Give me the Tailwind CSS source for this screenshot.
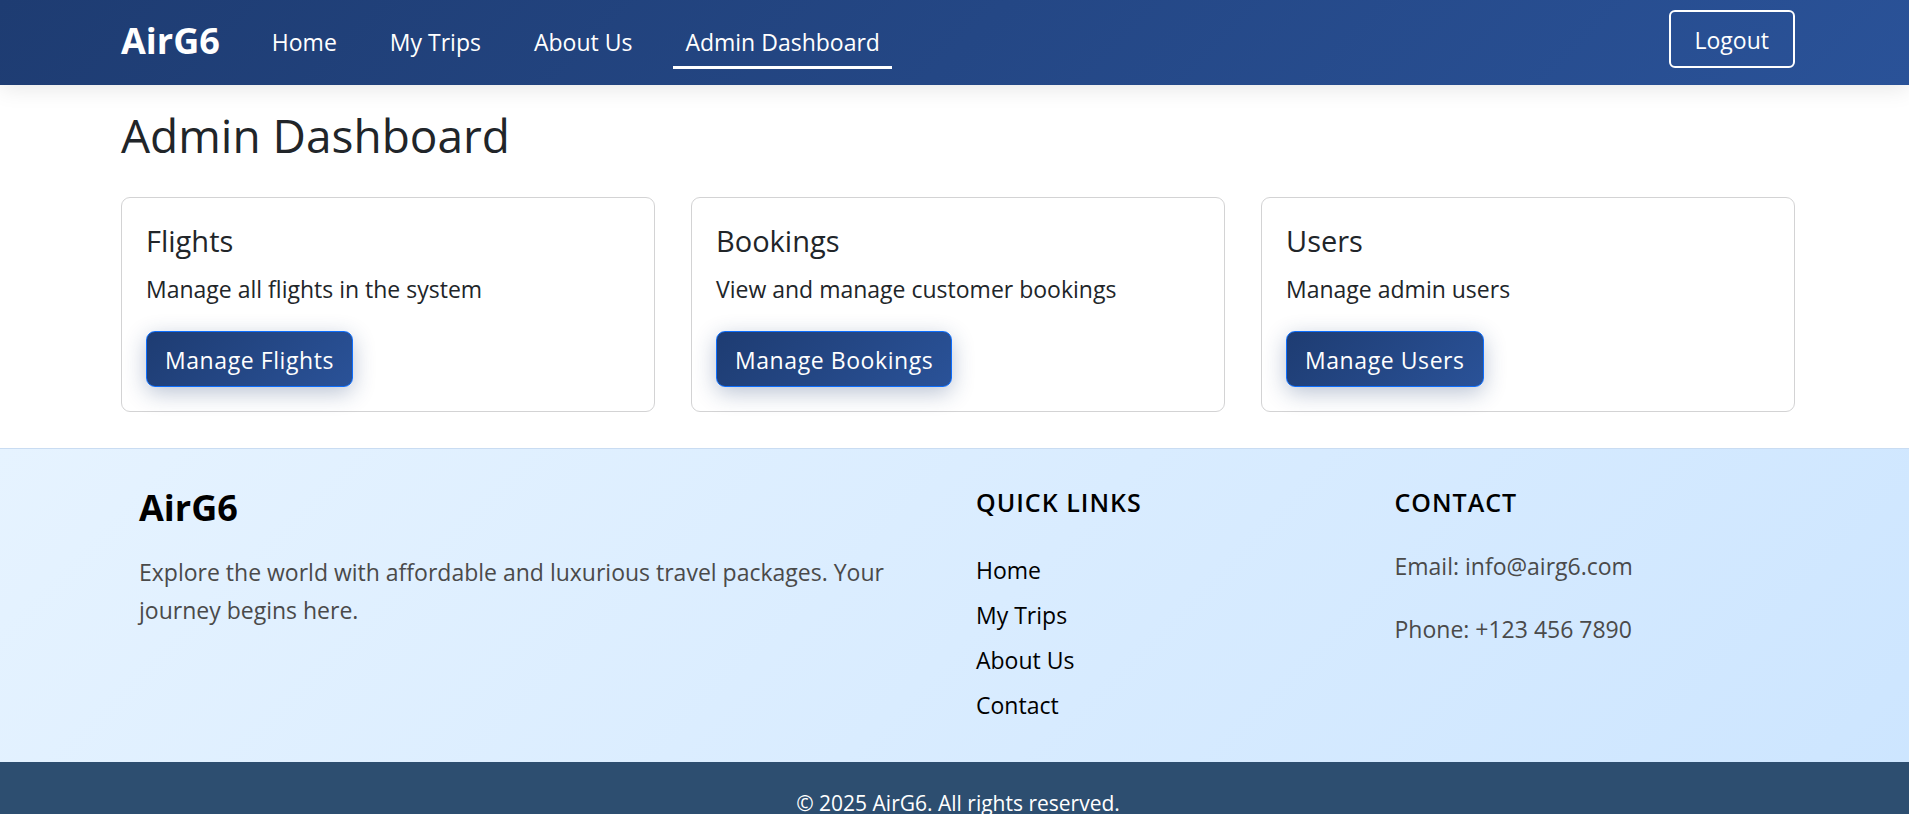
<!DOCTYPE html>
<html lang="en">
<head>
<meta charset="utf-8">
<title>AirG6 - Admin Dashboard</title>
<script src="https://cdn.jsdelivr.net/npm/@tailwindcss/browser@4"></script>
</head>
<body class="overflow-x-hidden bg-white font-['Segoe_UI','Open_Sans','Noto_Sans',sans-serif] text-[23px] leading-9 text-[#212529]">
  <header class="bg-linear-135 from-[#1e3c72] to-[#2a5298] shadow-[0_3px_22px_rgba(0,0,0,0.1)]">
    <nav class="flex h-[85px] items-center pr-[114px] pb-1 pl-[121px] text-white">
      <a href="#" class="mr-10 text-[36px] leading-[54px] font-bold">AirG6</a>
      <ul class="flex gap-[29px]">
        <li><a href="#" class="block border-b-3 border-transparent px-3 pt-3 pb-[6px]">Home</a></li>
        <li><a href="#" class="block border-b-3 border-transparent px-3 pt-3 pb-[6px]">My Trips</a></li>
        <li><a href="#" class="block border-b-3 border-transparent px-3 pt-3 pb-[6px]">About Us</a></li>
        <li><a href="#" aria-current="page" class="block border-b-3 border-white px-3 pt-3 pb-[6px]">Admin Dashboard</a></li>
      </ul>
      <button type="button" class="mb-[3px] ml-auto h-[58px] rounded-md border-2 border-white px-6 pt-[2px]">Logout</button>
    </nav>
  </header>

  <main class="pt-5 pr-[114px] pb-9 pl-[121px]">
    <h1 class="mb-8 text-[46px] leading-[60px]">Admin Dashboard</h1>
    <div class="grid grid-cols-3 gap-9">
      <section class="rounded-[9px] border border-[#d3d3d4] px-6 pt-[25px] pb-6">
        <h2 class="mb-3 text-[29px] leading-9">Flights</h2>
        <p class="mb-6">Manage all flights in the system</p>
        <button type="button" class="block h-14 rounded-[9px] border border-[#0d6efd] bg-linear-135 from-[#1e3c72] to-[#2a5298] px-[18px] pt-[2px] tracking-wide text-white shadow-[0_6px_22px_rgba(30,60,114,0.3)]">Manage Flights</button>
      </section>
      <section class="rounded-[9px] border border-[#d3d3d4] px-6 pt-[25px] pb-6">
        <h2 class="mb-3 text-[29px] leading-9">Bookings</h2>
        <p class="mb-6">View and manage customer bookings</p>
        <button type="button" class="block h-14 rounded-[9px] border border-[#0d6efd] bg-linear-135 from-[#1e3c72] to-[#2a5298] px-[18px] pt-[2px] tracking-wide text-white shadow-[0_6px_22px_rgba(30,60,114,0.3)]">Manage Bookings</button>
      </section>
      <section class="rounded-[9px] border border-[#d3d3d4] px-6 pt-[25px] pb-6">
        <h2 class="mb-3 text-[29px] leading-9">Users</h2>
        <p class="mb-6">Manage admin users</p>
        <button type="button" class="block h-14 rounded-[9px] border border-[#0d6efd] bg-linear-135 from-[#1e3c72] to-[#2a5298] px-[18px] pt-[2px] tracking-wide text-white shadow-[0_6px_22px_rgba(30,60,114,0.3)]">Manage Users</button>
      </section>
    </div>
  </main>

  <footer class="border-t border-[#c9dcf2] bg-linear-135 from-[#e6f3ff] to-[#cce5ff]">
    <div class="grid grid-cols-[2fr_1fr_1fr] pt-[35px] pr-[114px] pb-[39px] pl-[121px]">
      <div class="px-[18px]">
        <h3 class="mb-[21px] text-[36px] leading-[48px] font-bold text-black">AirG6</h3>
        <p class="leading-[38px] text-[#4a4a4a]">Explore the world with affordable and luxurious travel packages. Your journey begins here.</p>
      </div>
      <div class="px-[18px]">
        <h3 class="mb-8 text-[25px] leading-9 font-semibold tracking-[1px] text-black">QUICK LINKS</h3>
        <ul class="flex flex-col gap-[9px] text-black">
          <li><a href="#">Home</a></li>
          <li><a href="#">My Trips</a></li>
          <li><a href="#">About Us</a></li>
          <li><a href="#">Contact</a></li>
        </ul>
      </div>
      <div class="px-[18px]">
        <h3 class="mb-7 text-[25px] leading-9 font-semibold tracking-[1px] text-black">CONTACT</h3>
        <p class="mb-[27px] text-[#4a4a4a]">Email: info@airg6.com</p>
        <p class="text-[#4a4a4a]">Phone: +123 456 7890</p>
      </div>
    </div>
    <p class="bg-[#2d4e70] pt-[25px] pr-[114px] pb-6 pl-[121px] text-center text-[21px] leading-8 text-white">© 2025 AirG6. All rights reserved.</p>
  </footer>
</body>
</html>
